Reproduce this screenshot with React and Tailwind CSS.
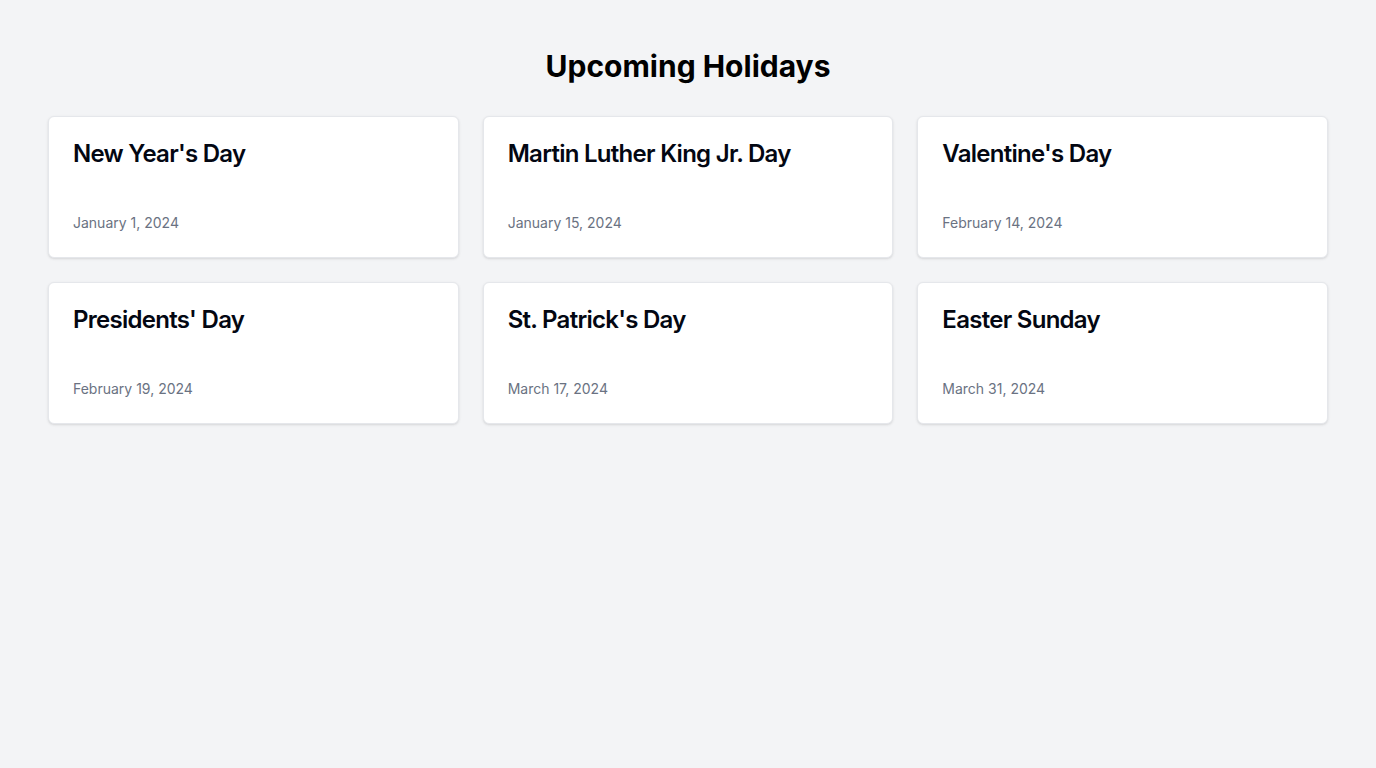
const holidays = [
  { name: "New Year's Day", date: "January 1, 2024" },
  { name: "Martin Luther King Jr. Day", date: "January 15, 2024" },
  { name: "Valentine's Day", date: "February 14, 2024" },
  { name: "Presidents' Day", date: "February 19, 2024" },
  { name: "St. Patrick's Day", date: "March 17, 2024" },
  { name: "Easter Sunday", date: "March 31, 2024" },
];

function App() {
  return (
    <div className="min-h-screen bg-gray-100 py-12 font-['Inter',sans-serif]">
      <div className="max-w-7xl mx-auto">
        <h1 className="text-3xl font-bold text-center text-black mb-8">
          Upcoming Holidays
        </h1>
        <div className="grid grid-cols-3 gap-6">
          {holidays.map((h) => (
            <div
              key={h.name}
              className="bg-white rounded-md border border-gray-200 shadow-sm p-6"
            >
              <h2 className="text-2xl font-semibold leading-[26px] tracking-[-0.03em] text-gray-950">
                {h.name}
              </h2>
              <p className="mt-[46px] text-sm text-gray-500">{h.date}</p>
            </div>
          ))}
        </div>
      </div>
    </div>
  );
}

export default App;
